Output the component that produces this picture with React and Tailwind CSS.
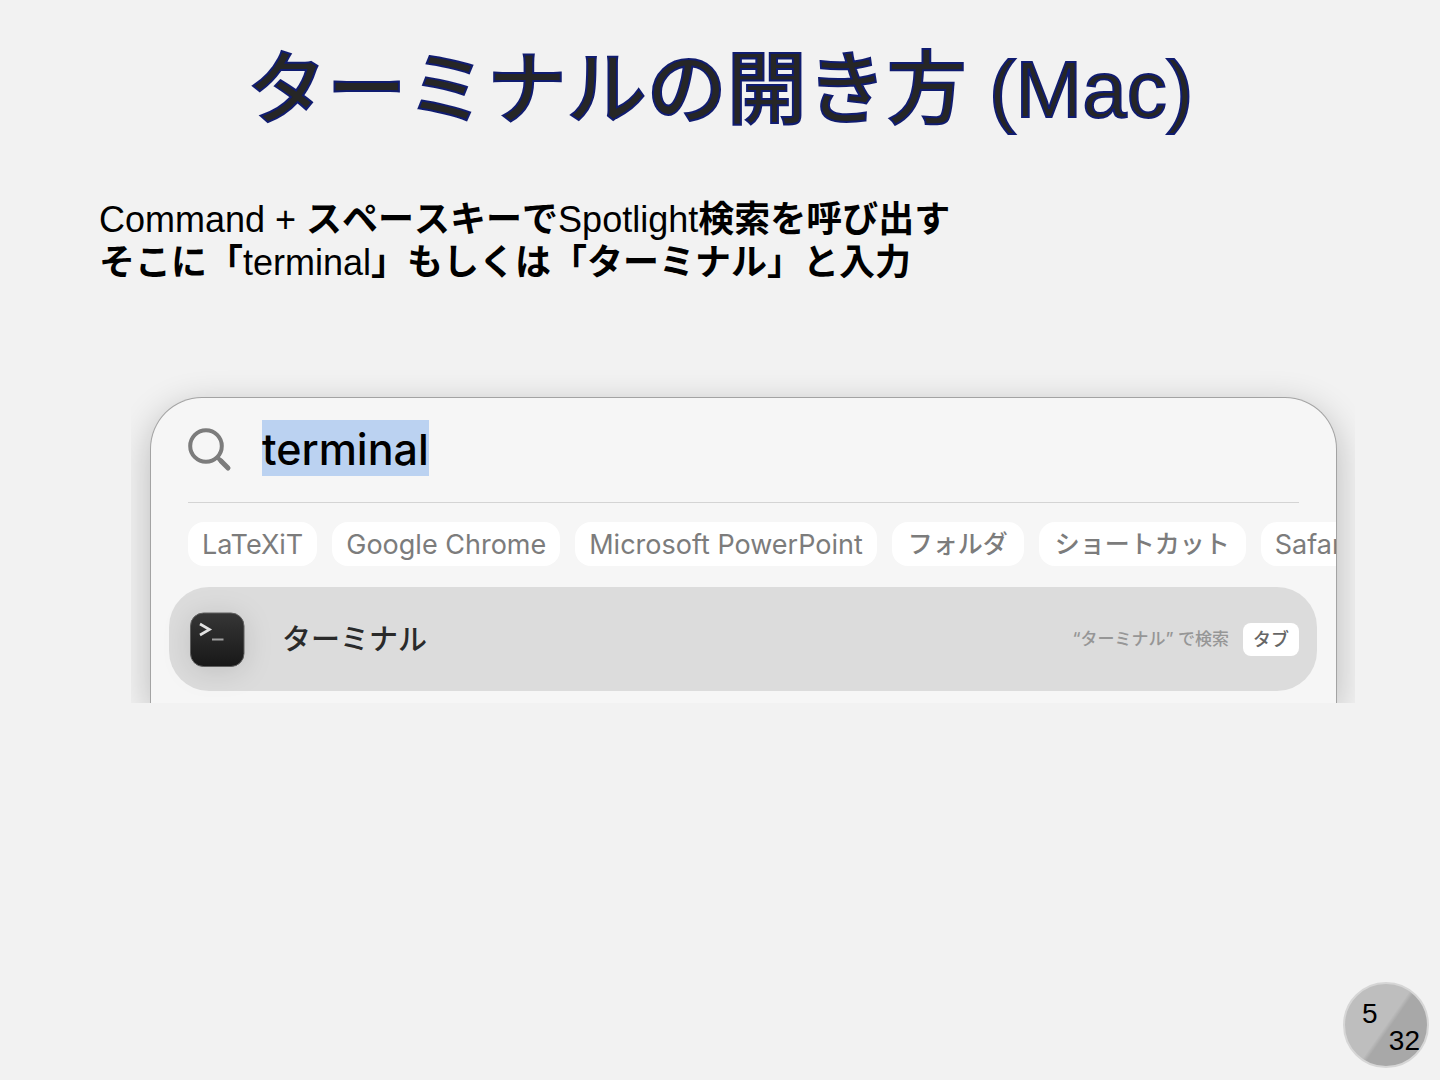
const LATIN = "font-['Liberation_Sans','Noto_Sans_CJK_JP',sans-serif]";
const SYSTEM = "font-['Inter','Noto_Sans_CJK_JP',sans-serif]";

const suggestions = [
  { name: 'LaTeXiT' },
  { name: 'Google Chrome' },
  { name: 'Microsoft PowerPoint' },
  { name: 'フォルダ', kana: true },
  { name: 'ショートカット', kana: true },
  { name: 'Safari' },
];

function SearchIcon() {
  return (
    <svg className="mt-2 h-11 w-11 shrink-0" viewBox="0 0 44 44" fill="none" stroke="#7c7c7c" aria-hidden="true">
      <circle cx="18" cy="18" r="15.8" strokeWidth="4" />
      <path d="M29 29 L34 34" strokeWidth="4" />
      <path d="M33 33 L40 40" strokeWidth="5" strokeLinecap="round" />
    </svg>
  );
}

function TerminalIcon() {
  return (
    <svg
      className="h-14 w-14 shrink-0 drop-shadow-[0_4px_14px_rgba(0,0,0,0.12)]"
      viewBox="0 0 56 56"
      fill="none"
      aria-hidden="true"
    >
      <defs>
        <linearGradient id="terminal-face" x1="0" y1="0" x2="0" y2="1">
          <stop offset="0" stopColor="#363636" />
          <stop offset="1" stopColor="#181818" />
        </linearGradient>
      </defs>
      <rect x="1.5" y="2" width="53.5" height="53.5" rx="13" fill="url(#terminal-face)" stroke="#5e5e5e" />
      <path d="M11 13 L20.5 18.5 L11 24" stroke="#e2e2e2" strokeWidth="2.6" />
      <path d="M23 28.5 H34.5" stroke="#a0a0a0" strokeWidth="2" />
    </svg>
  );
}

function Spotlight() {
  return (
    <section className="overflow-hidden pt-[57px] pr-[18px] pl-[19px]" aria-label="Spotlight">
      <div className={`${SYSTEM} overflow-hidden rounded-t-[52px] border border-b-0 border-[#a3a3a3] bg-[#f6f6f6] pb-3 shadow-[0_10px_36px_rgba(0,0,0,0.24)]`}>
        <div className="mx-[37px] flex h-[105px] items-start gap-[30px] border-b border-[#d4d4d4] pt-[22px]">
          <SearchIcon />
          <input
            type="text"
            aria-label="Spotlight検索"
            defaultValue="terminal"
            className="field-sizing-content h-14 bg-[#bbd2f1] pt-[2px] text-[43px] font-medium text-black outline-none"
          />
        </div>

        <div className="ml-[37px] flex gap-[15px] pt-[19px]">
          {suggestions.map(({ name, kana }) => (
            <button
              key={name}
              type="button"
              className={`h-11 shrink-0 rounded-2xl bg-white pt-[2px] whitespace-nowrap text-[#7c7c7c] ${
                kana ? 'px-4 text-[25px] font-medium [font-kerning:none]' : 'px-[14px] text-[27px]'
              }`}
            >
              {name}
            </button>
          ))}
        </div>

        <div className="mr-[19px] ml-[18px] mt-[21px] flex h-[104px] items-center rounded-[40px] bg-[#dcdcdc] pr-[18px] pl-5">
          <TerminalIcon />
          <span className="ml-[37px] flex-1 pt-[2px] text-[29px] font-medium text-[#2a2a2a]">ターミナル</span>
          <span className="mr-[14px] pt-[2px] text-[17px] font-medium text-[#969696]">“ターミナル” で検索</span>
          <kbd className={`${SYSTEM} h-[33px] rounded-lg bg-white px-[10px] text-[18px] leading-[33px] font-medium text-[#666666]`}>
            タブ
          </kbd>
        </div>
      </div>
    </section>
  );
}

function PageNumber({ current, total }) {
  return (
    <footer className="mt-auto flex justify-end pr-[11px] pb-3">
      <div className="flex h-[86px] w-[86px] flex-col justify-center rounded-full border-2 border-[#d6d6d6] bg-[linear-gradient(125deg,#bebebe_50%,#a8a8a8_54%)] pt-[3px] pr-[7px] pl-[17px] text-[28px] leading-[27px] text-black">
        <span>{current}</span>
        <span className="self-end">{total}</span>
      </div>
    </footer>
  );
}

export default function App() {
  return (
    <main lang="ja" className={`${LATIN} flex min-h-screen flex-col bg-[#f2f2f2]`}>
      <h1 className="pt-[31px] text-center text-[80px] leading-[118px] text-[#262626] [font-kerning:none] [-webkit-text-stroke:2px_#101c70]">
        <span className="font-medium">ターミナルの開き方</span> (Mac)
      </h1>

      <p className="mt-[49px] px-[99px] text-[36px] leading-[43px] text-black [font-kerning:none]">
        Command + <span className="font-bold">スペースキーで</span>Spotlight
        <span className="font-bold">検索を呼び出す</span>
        <br />
        <span className="font-bold">そこに「</span>terminal
        <span className="font-bold">」もしくは「ターミナル」と入力</span>
      </p>

      <div className="mt-14 pr-[85px] pl-[131px]">
        <Spotlight />
      </div>

      <PageNumber current={5} total={32} />
    </main>
  );
}
